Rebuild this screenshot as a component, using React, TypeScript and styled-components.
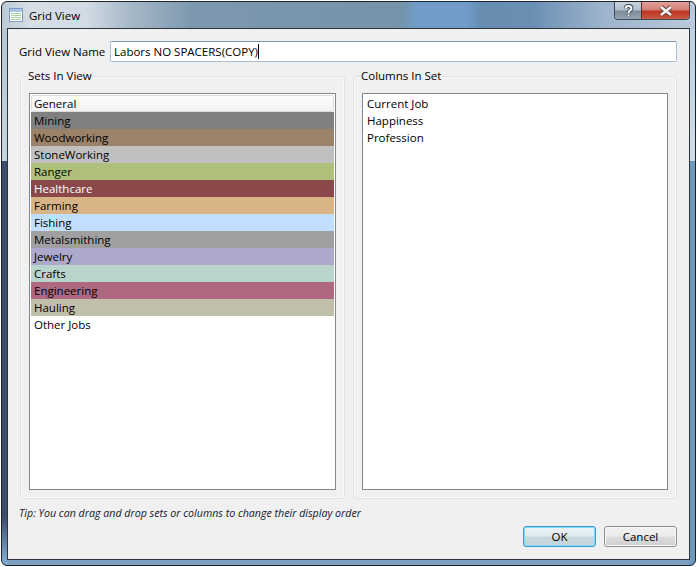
import * as React from 'react'
import styled, { createGlobalStyle } from 'styled-components'

const GlobalStyle = createGlobalStyle`
    html, body {
        margin: 0;
        padding: 0;
        background: #fff;
    }
    * {
        box-sizing: border-box;
    }
`

const sets = [
    { name: 'General', color: 'general', text: '#000' },
    { name: 'Mining', color: '#808080', text: '#000' },
    { name: 'Woodworking', color: '#9c8269', text: '#000' },
    { name: 'StoneWorking', color: '#c0c0c0', text: '#000' },
    { name: 'Ranger', color: '#aec07c', text: '#000' },
    { name: 'Healthcare', color: '#8b484b', text: '#fff' },
    { name: 'Farming', color: '#d9b486', text: '#000' },
    { name: 'Fishing', color: '#c0dffe', text: '#000' },
    { name: 'Metalsmithing', color: '#a0a0a2', text: '#000' },
    { name: 'Jewelry', color: '#aca9cc', text: '#000' },
    { name: 'Crafts', color: '#b8d4cc', text: '#000' },
    { name: 'Engineering', color: '#af6880', text: '#000' },
    { name: 'Hauling', color: '#c0bfa9', text: '#000' },
    { name: 'Other Jobs', color: 'transparent', text: '#000' }
]

const columns = ['Current Job', 'Happiness', 'Profession']

const Page = styled.div`
    width: 697px;
    height: 567px;
    padding: 1px 1px 1px;
    background: #fff;
`

const Frame = styled.div`
    width: 695px;
    height: 565px;
    display: flex;
    flex-direction: column;
    padding: 0 5px 5px;
    border: 1px solid #1c232b;
    border-radius: 6px;
    overflow: hidden;
    font-family: 'Open Sans', 'Noto Sans', sans-serif;
    font-size: 11.5px;
    color: #000;
    background:
        linear-gradient(90deg, #bccad6 0, #d6dee6 30px, #d2dbe4 85px, #a9bac9 125px, #7d98ae 190px, #7593aa 400px, #6f9cc8 415px, #6f9cc8 465px, #668cb0 480px, #6a8fb3 530px, #9db3cc 600px, #b8cadb 690px) top / 100% 27px no-repeat,
        linear-gradient(180deg, #b4c2ce 0, #c8d5df 159px, #3d4d6e 159px, #3d4d6e 515px, #7fa8cc 558px) left / 6px 100% no-repeat,
        linear-gradient(180deg, #b9cfe0 0, #cfdde8 159px, #6f98bd 159px, #6f98bd 560px) right / 6px 100% no-repeat,
        #7a9fc2;
`

const TitleBar = styled.div`
    height: 26px;
    flex: none;
    display: flex;
    align-items: flex-start;
    justify-content: space-between;
`

const TitleLeft = styled.div`
    display: flex;
    align-items: center;
    gap: 5px;
    height: 26px;
    padding-left: 1px;
    font-size: 11.5px;
`

const CaptionButtons = styled.div`
    display: flex;
    height: 18px;
    border: 1px solid #3e4a55;
    border-top: none;
    border-radius: 0 0 4px 4px;
    overflow: hidden;
`

const HelpButton = styled.div`
    width: 27px;
    display: flex;
    align-items: center;
    justify-content: center;
    border-right: 1px solid #6e2a20;
    background: linear-gradient(180deg, #c4d0da 0%, #b3c0cb 48%, #7c8c98 52%, #94a5b1 100%);
`

const CloseButton = styled.div`
    width: 47px;
    display: flex;
    align-items: center;
    justify-content: center;
    background: linear-gradient(180deg, #e0a096 0%, #d2807a 46%, #c0341e 54%, #c85a44 100%);
`

const Client = styled.div`
    flex: 1;
    display: flex;
    flex-direction: column;
    padding: 12px 12px 12px 11px;
    background: #f0f0f0;
    border: 1px solid #2c3640;
`

const NameRow = styled.div`
    display: flex;
    align-items: center;
    height: 21px;
`

const NameLabel = styled.label`
    width: 91px;
    flex: none;
`

const NameInput = styled.div`
    flex: 1;
    height: 21px;
    padding: 1px 3px;
    display: flex;
    align-items: center;
    background: #fff;
    border: 1px solid #abc0d4;
    border-top-color: #7a9ab8;
    border-radius: 2px;
`

const Caret = styled.span`
    display: inline-block;
    width: 1px;
    height: 15px;
    background: #000;
`

const Groups = styled.div`
    flex: 1;
    display: grid;
    grid-template-columns: 325px 324px;
    gap: 8px;
    margin-top: 14px;
    margin-left: 1px;
    min-height: 0;
`

const Group = styled.fieldset`
    position: relative;
    margin: 0;
    padding: 16px 8px 8px;
    min-width: 0;
    display: flex;
    border: 1px solid #dce2e6;
    box-shadow: inset 0 0 0 1px #f8f8f8;
    border-radius: 3px;
`

const GroupTitle = styled.span`
    position: absolute;
    top: -8px;
    left: 6px;
    padding: 0 1px;
    line-height: 14px;
    background: #f0f0f0;
`

const ListBox = styled.div`
    flex: 1;
    padding: 1px;
    background: #fff;
    border: 1px solid #828790;
`

const SetRow = styled.div<{ $bg: string; $fg: string }>`
    height: 17px;
    line-height: 17px;
    padding-left: 3px;
    color: ${(p) => p.$fg};
    background: ${(p) => p.$bg};
`

const HeaderRow = styled.div`
    height: 17px;
    line-height: 16px;
    padding-left: 2px;
    background: linear-gradient(180deg, #fdfdfd 0%, #f2f2f2 100%);
    border: 1px solid #dcdcdc;
    border-radius: 2px;
`

const ColumnRow = styled.div`
    height: 17px;
    line-height: 17px;
    padding-left: 3px;
`

const Tip = styled.div`
    margin-top: 7px;
    height: 14px;
    line-height: 14px;
    font-size: 10.65px;
    font-style: italic;
    color: #10192c;
`

const Footer = styled.div`
    display: flex;
    justify-content: flex-end;
    gap: 8px;
    margin-top: 6px;
`

const Button = styled.button<{ $primary?: boolean }>`
    width: 73px;
    height: 21px;
    padding: 0;
    font: inherit;
    color: #000;
    border-radius: 3px;
    border: 1px solid ${(p) => (p.$primary ? '#3c9ad0' : '#8e8f8f')};
    background: ${(p) =>
        p.$primary
            ? 'linear-gradient(180deg, #eaf5fa 0%, #e0ebf1 48%, #c8d7df 52%, #c6d4dc 100%)'
            : 'linear-gradient(180deg, #f2f2f2 0%, #ebebeb 48%, #dddddd 52%, #cfcfcf 100%)'};
    box-shadow: inset 0 0 0 1px ${(p) => (p.$primary ? '#7fdcf5' : '#f8f8f8')};
`

const GridIcon = () => (
    <svg width="16" height="16" viewBox="0 0 16 16">
        <rect x="1.5" y="1.5" width="13" height="13" fill="#fdfeff" stroke="#7e9fc4" />
        <rect x="2" y="2" width="12" height="3" fill="#a9c5e3" />
        <path d="M3 6.5h10M3 8.5h10M3 10.5h10M3 12.5h10" stroke="#a6cf9c" strokeWidth="1" />
        <path d="M6.5 6v7" stroke="#d8e8d4" strokeWidth="1" />
    </svg>
)

const HelpIcon = () => (
    <svg width="11" height="14" viewBox="0 0 11 14">
        <path
            d="M2.5 4.5C2.5 2.5 3.8 2 5.5 2S8.5 3 8.5 4.5 7.3 6.2 6.4 7 5.5 8 5.5 9M5.5 10.5v2"
            fill="none"
            stroke="#3a444c"
            strokeWidth="3.8"
        />
        <path
            d="M2.5 4.5C2.5 2.5 3.8 2 5.5 2S8.5 3 8.5 4.5 7.3 6.2 6.4 7 5.5 8 5.5 9M5.5 10.5v2"
            fill="none"
            stroke="#f7f9fa"
            strokeWidth="2"
        />
    </svg>
)

const CloseIcon = () => (
    <svg width="16" height="12" viewBox="0 0 16 12">
        <path d="M3 2l10 8M13 2L3 10" stroke="#5a3a38" strokeWidth="4.4" />
        <path d="M3 2l10 8M13 2L3 10" stroke="#f6f1ee" strokeWidth="2.8" />
    </svg>
)

const App: React.FC = () => (
    <>
        <GlobalStyle />
        <Page>
            <Frame>
                <TitleBar>
                    <TitleLeft>
                        <GridIcon />
                        Grid View
                    </TitleLeft>
                    <CaptionButtons>
                        <HelpButton>
                            <HelpIcon />
                        </HelpButton>
                        <CloseButton>
                            <CloseIcon />
                        </CloseButton>
                    </CaptionButtons>
                </TitleBar>
                <Client>
                    <NameRow>
                        <NameLabel>Grid View Name</NameLabel>
                        <NameInput>
                            Labors NO SPACERS(COPY)
                            <Caret />
                        </NameInput>
                    </NameRow>
                    <Groups>
                        <Group>
                            <GroupTitle>Sets In View</GroupTitle>
                            <ListBox>
                                {sets.map((set) =>
                                    set.color === 'general' ? (
                                        <HeaderRow key={set.name}>{set.name}</HeaderRow>
                                    ) : (
                                        <SetRow key={set.name} $bg={set.color} $fg={set.text}>
                                            {set.name}
                                        </SetRow>
                                    )
                                )}
                            </ListBox>
                        </Group>
                        <Group>
                            <GroupTitle>Columns In Set</GroupTitle>
                            <ListBox>
                                {columns.map((column) => (
                                    <ColumnRow key={column}>{column}</ColumnRow>
                                ))}
                            </ListBox>
                        </Group>
                    </Groups>
                    <Tip>Tip: You can drag and drop sets or columns to change their display order</Tip>
                    <Footer>
                        <Button $primary>OK</Button>
                        <Button>Cancel</Button>
                    </Footer>
                </Client>
            </Frame>
        </Page>
    </>
)

export default App
